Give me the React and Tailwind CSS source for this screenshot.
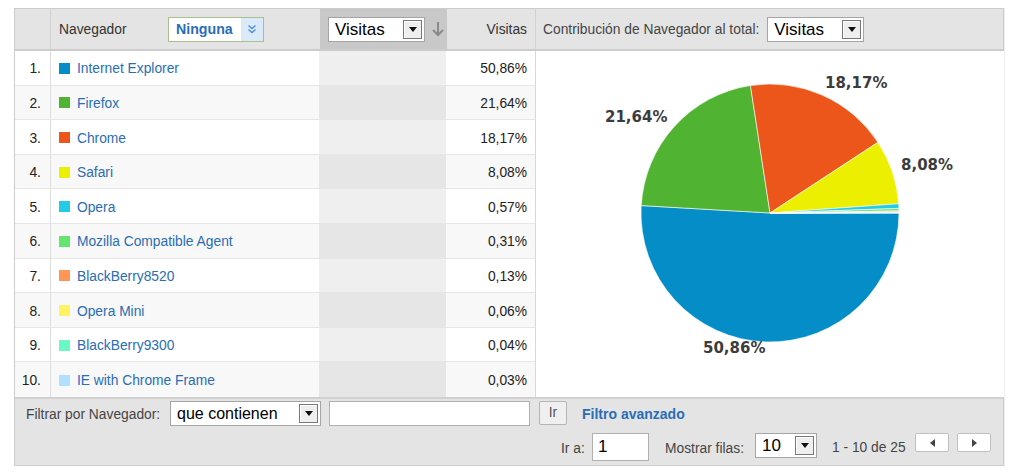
import React from 'react';

const rows = [
  { name: 'Internet Explorer', pct: 50.86, color: '#058dc7' },
  { name: 'Firefox', pct: 21.64, color: '#50b432' },
  { name: 'Chrome', pct: 18.17, color: '#ed561b' },
  { name: 'Safari', pct: 8.08, color: '#edef00' },
  { name: 'Opera', pct: 0.57, color: '#24cbe5' },
  { name: 'Mozilla Compatible Agent', pct: 0.31, color: '#64e572' },
  { name: 'BlackBerry8520', pct: 0.13, color: '#ff9655' },
  { name: 'Opera Mini', pct: 0.06, color: '#fff263' },
  { name: 'BlackBerry9300', pct: 0.04, color: '#6af9c4' },
  { name: 'IE with Chrome Frame', pct: 0.03, color: '#b2deff' },
];

const fmt = (n) => n.toFixed(2).replace('.', ',') + '%';

function Select({ value, width, textSize = 'text-[17px]' }) {
  return (
    <div className={`flex items-center h-[25px] bg-white border border-[#a5a5a5] ${width}`}>
      <span className={`flex-1 pl-[6px] ${textSize} leading-none text-black`}>{value}</span>
      <span className="w-[19px] h-[19px] mr-[2px] flex items-center justify-center bg-[#eeeeee] border border-[#777] shadow-[inset_1px_1px_0_#fff]">
        <svg width="8" height="5" viewBox="0 0 8 5"><path d="M0 0h8L4 5z" fill="#111" /></svg>
      </span>
    </div>
  );
}

function Pie() {
  const cx = 234, cy = 162, r = 129;
  let start = 0;
  const slices = rows.map((d) => {
    const a0 = start;
    const a1 = start + (d.pct / 100.0) * Math.PI * 2 * (100 / 99.89);
    start = a1;
    const x0 = cx + r * Math.cos(a0), y0 = cy + r * Math.sin(a0);
    const x1 = cx + r * Math.cos(a1), y1 = cy + r * Math.sin(a1);
    const large = a1 - a0 > Math.PI ? 1 : 0;
    return (
      <path key={d.name} d={`M${cx} ${cy}L${x0} ${y0}A${r} ${r} 0 ${large} 1 ${x1} ${y1}Z`} fill={d.color} stroke="#fff" strokeWidth="0.6" strokeLinejoin="round" />
    );
  });
  return (
    <svg width="468" height="346" viewBox="0 0 468 346" className="block">
      {slices}
      <g fill="#3c3c3c" fontFamily='"DejaVu Sans", sans-serif' fontWeight="bold" fontSize="15">
        <text x="289" y="37">18,17%</text>
        <text x="69" y="71">21,64%</text>
        <text x="365" y="119">8,08%</text>
        <text x="167" y="302">50,86%</text>
      </g>
    </svg>
  );
}

export default function App() {
  return (
    <div className="w-[1016px] h-[474px] bg-white pt-[8px] pl-[14px] font-['Liberation_Sans',Arial,sans-serif] text-[13.8px] text-[#333]">
      <div className="w-[990px] border border-[#cccccc] shadow-[1px_0_0_#eee]">
        {/* header */}
        <div className="flex h-[42px] bg-[#e4e4e4] border-b-2 border-[#cccccc]">
          <div className="w-[36px] border-r border-[#d2d2d2]" />
          <div className="w-[269px] flex items-center pl-[8px]">
            <span className="w-[109px] pt-[3px]">Navegador</span>
            <div className="flex items-stretch h-[25px] w-[96px] bg-white border border-[#a9c08e]">
              <span className="flex-1 flex items-center pl-[7px] pt-[2px] font-bold text-[14.2px] text-[#2a6db5]">Ninguna</span>
              <span className="w-[22px] flex items-center justify-center bg-[#dbeaf8]">
                <svg width="10" height="10" viewBox="0 0 10 10" fill="none" stroke="#4f8fcf" strokeWidth="1.4">
                  <path d="M1.5 1.5 5 4.5 8.5 1.5M1.5 5.5 5 8.5 8.5 5.5" />
                </svg>
              </span>
            </div>
          </div>
          <div className="w-[127px] bg-[#c8c8c8] flex items-center pl-[8px] gap-[6px]">
            <Select value="Visitas" width="w-[97px]" />
            <svg width="14" height="16" viewBox="0 0 14 16" fill="none" stroke="#8a8a8a" strokeWidth="2">
              <path d="M7 1v13M2 9l5 5 5-5" />
            </svg>
          </div>
          <div className="w-[89px] flex items-center justify-end pr-[8px] pt-[3px] border-r border-[#d2d2d2]">Visitas</div>
          <div className="flex-1 flex items-center pl-[7px]">
            <span className="mr-[8px] pt-[3px] text-[#444]">Contribución de Navegador al total:</span>
            <Select value="Visitas" width="w-[97px]" />
          </div>
        </div>
        {/* body */}
        <div className="flex">
          <div className="w-[521px] border-r border-[#d8d8d8]">
            {rows.map((d, i) => (
              <div key={d.name} className={`flex h-[34.6px] pt-[4px] border-b border-[#e6e6e6] ${i % 2 ? 'bg-[#f8f8f8]' : 'bg-white'} ${i === rows.length - 1 ? 'border-b-0' : ''}`}>
                <div className="w-[36px] -mt-[4px] pt-[4px] flex items-center justify-end pr-[9px] border-r border-[#dddddd] text-[#222]">{i + 1}.</div>
                <div className="w-[269px] flex items-center pl-[8px] gap-[7px]">
                  <span className="w-[11px] h-[11px] -mt-[3px]" style={{ backgroundColor: d.color }} />
                  <span className="text-[#2a6db5]">{d.name}</span>
                </div>
                <div className={`w-[127px] -mt-[4px] ${i % 2 ? 'bg-[#e6e6e6]' : 'bg-[#efefef]'}`} />
                <div className="w-[89px] flex items-center justify-end pr-[8px] text-[#222]">{fmt(d.pct)}</div>
              </div>
            ))}
          </div>
          <div className="flex-1 bg-white">
            <Pie />
          </div>
        </div>
        {/* footer */}
        <div className="h-[68px] bg-[#e4e4e4] border-t-2 border-[#d0d0d0] flex flex-col pl-[11px] pr-[12px] text-[#444]">
          <div className="flex items-start pt-[2px] h-[31px]">
            <span className="mt-[4px] w-[144px]">Filtrar por Navegador:</span>
            <Select value="que contienen" width="w-[151px]" textSize="text-[16px]" />
            <div className="ml-[8px] w-[201px] h-[25px] bg-white border border-[#b0b0b0]" />
            <button className="ml-[9px] w-[28px] h-[24px] rounded-[2px] border border-[#b5b5b5] bg-[#efefef] text-[#555] text-[13.8px]">Ir</button>
            <a className="ml-[15px] mt-[3px] font-bold text-[14px] text-[#2a6db5]">Filtro avanzado</a>
          </div>
          <div className="flex items-start justify-end pt-[3px]">
            <span className="w-[31px] mt-[6px]">Ir a:</span>
            <div className="w-[57px] h-[28px] bg-white border border-[#b0b0b0] flex items-center pl-[5px] text-[17px] text-black">1</div>
            <span className="ml-[16px] w-[90px] mt-[6px]">Mostrar filas:</span>
            <div className="mt-[0px]"><Select value="10" width="w-[62px]" /></div>
            <span className="ml-[15px] w-[83px] mt-[5px]">1 - 10 de 25</span>
            <button className="w-[34px] h-[19px] border border-[#c0c0c0] bg-white rounded-[2px] flex items-center justify-center">
              <svg width="5" height="8" viewBox="0 0 5 8"><path d="M5 0v8L0 4z" fill="#444" /></svg>
            </button>
            <button className="ml-[8px] w-[34px] h-[19px] border border-[#c0c0c0] bg-white rounded-[2px] flex items-center justify-center">
              <svg width="5" height="8" viewBox="0 0 5 8"><path d="M0 0v8l5-4z" fill="#444" /></svg>
            </button>
          </div>
        </div>
      </div>
    </div>
  );
}
